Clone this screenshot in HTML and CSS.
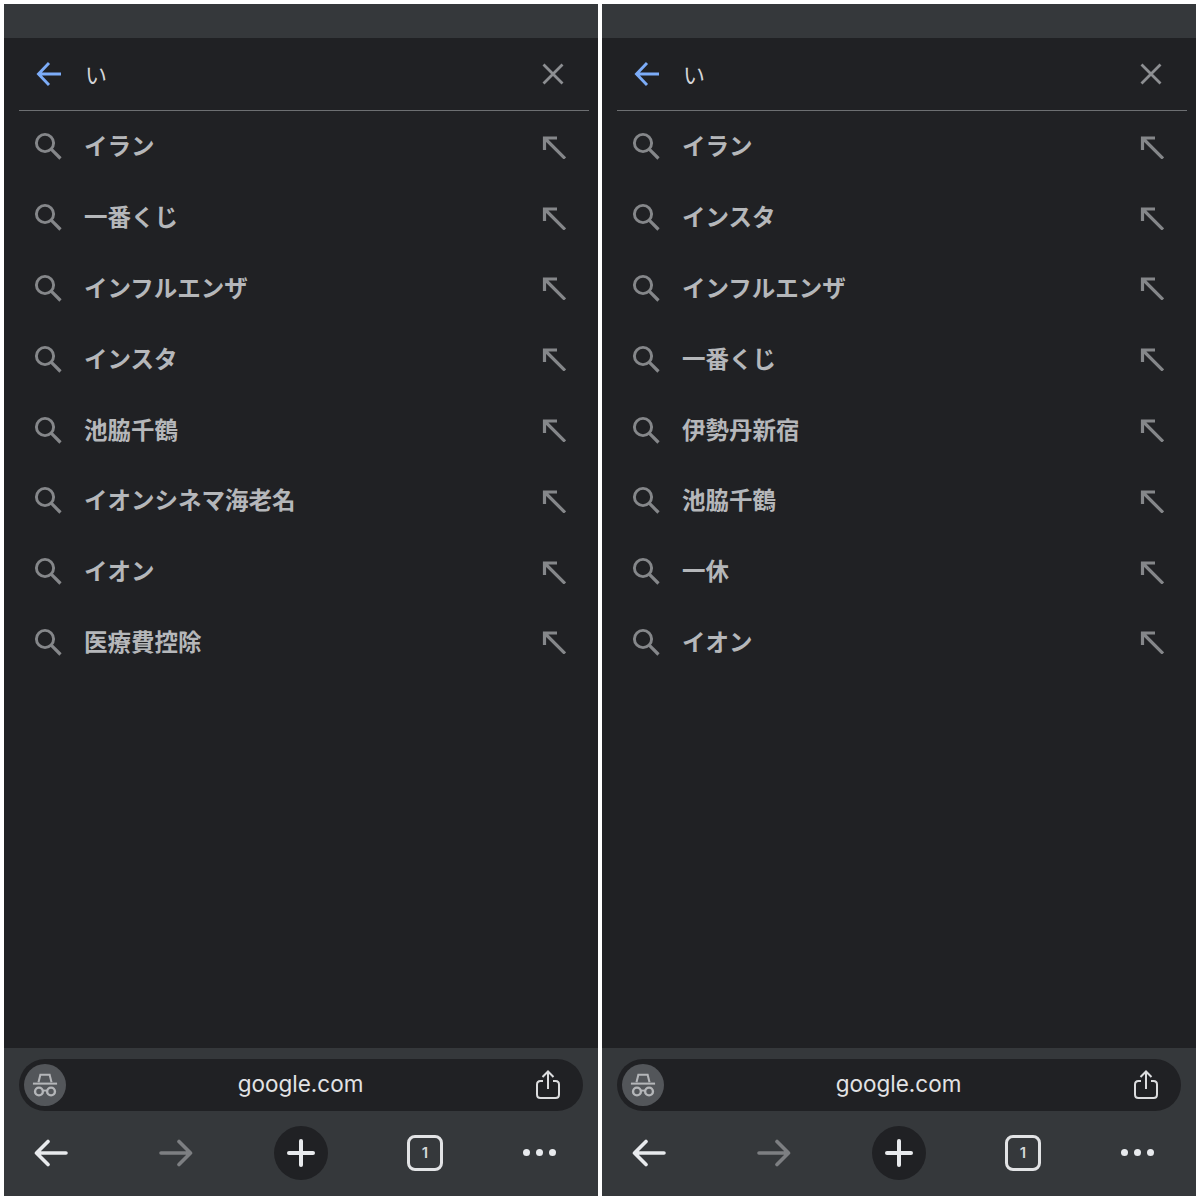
FILE: index.html
```html
<!DOCTYPE html>
<html lang="ja">
<head>
  <meta charset="UTF-8" />
  <title>い - google.com</title>
  <link rel="stylesheet" href="styles.css">
</head>
<body>
  <svg class="defs" width="0" height="0">
    <symbol id="i-search" viewBox="0 0 28 28">
      <circle cx="11" cy="11" r="8.6" fill="none" stroke="currentColor" stroke-width="2.9"/>
      <path d="M17.2 17.2 L26.500 26.500" fill="none" stroke="currentColor" stroke-width="3.200"/>
    </symbol>
    <symbol id="i-fill" viewBox="0 0 24 24">
      <path d="M2.500 3 L23 23.500 M2.500 1.500 V15 M1 3 H15" fill="none" stroke="currentColor" stroke-width="3.200"/>
    </symbol>
    <symbol id="i-close" viewBox="0 0 22 22">
      <path d="M1.500 1.500 L20.500 20.500 M20.500 1.500 L1.500 20.500" fill="none" stroke="currentColor" stroke-width="2.800"/>
    </symbol>
    <symbol id="i-back" viewBox="0 0 26 26">
      <path d="M25 13 H3 M13 2 L2.500 13 L13 24" fill="none" stroke="currentColor" stroke-width="2.900"/>
    </symbol>
    <symbol id="i-spy" viewBox="0 0 28 28">
      <path d="M7 11 L9 3 H19 L21 11" fill="none" stroke="currentColor" stroke-width="2.200"/>
      <path d="M1 12.500 H27" fill="none" stroke="currentColor" stroke-width="2.200"/>
      <circle cx="7.500" cy="21" r="4.200" fill="none" stroke="currentColor" stroke-width="2.600"/>
      <circle cx="20.500" cy="21" r="4.200" fill="none" stroke="currentColor" stroke-width="2.600"/>
      <path d="M11.700 20 H16.300" fill="none" stroke="currentColor" stroke-width="2"/>
    </symbol>
    <symbol id="i-share" viewBox="0 0 26 30">
      <path d="M8 11 H5.500 Q2 11 2 14.500 V24.500 Q2 28 5.500 28 H20.500 Q24 28 24 24.500 V14.500 Q24 11 20.500 11 H18" fill="none" stroke="currentColor" stroke-width="2"/>
      <path d="M13 19 V2 M7.500 7 L13 1.500 L18.500 7" fill="none" stroke="currentColor" stroke-width="2"/>
    </symbol>
    <symbol id="i-arrow" viewBox="0 0 36 28">
      <path d="M33 14 H4 M15 2.500 L3.500 14 L15 25.500" fill="none" stroke="currentColor" stroke-width="3.600" stroke-linecap="round" stroke-linejoin="round"/>
    </symbol>
  </svg>

  <div class="screens">
    <div class="phone">
      <div class="top-bar"></div>
      <div class="content">
        <div class="search-head">
          <svg class="back-icon"><use href="#i-back"/></svg>
          <span class="query">い</span>
          <svg class="close-icon"><use href="#i-close"/></svg>
        </div>
        <ul class="suggestions">
          <li><svg class="search-icon"><use href="#i-search"/></svg><span>イラン</span><svg class="fill-icon"><use href="#i-fill"/></svg></li>
          <li><svg class="search-icon"><use href="#i-search"/></svg><span>一番くじ</span><svg class="fill-icon"><use href="#i-fill"/></svg></li>
          <li><svg class="search-icon"><use href="#i-search"/></svg><span>インフルエンザ</span><svg class="fill-icon"><use href="#i-fill"/></svg></li>
          <li><svg class="search-icon"><use href="#i-search"/></svg><span>インスタ</span><svg class="fill-icon"><use href="#i-fill"/></svg></li>
          <li><svg class="search-icon"><use href="#i-search"/></svg><span>池脇千鶴</span><svg class="fill-icon"><use href="#i-fill"/></svg></li>
          <li><svg class="search-icon"><use href="#i-search"/></svg><span>イオンシネマ海老名</span><svg class="fill-icon"><use href="#i-fill"/></svg></li>
          <li><svg class="search-icon"><use href="#i-search"/></svg><span>イオン</span><svg class="fill-icon"><use href="#i-fill"/></svg></li>
          <li><svg class="search-icon"><use href="#i-search"/></svg><span>医療費控除</span><svg class="fill-icon"><use href="#i-fill"/></svg></li>
        </ul>
      </div>
      <div class="bottom">
        <div class="url-bar">
          <div class="spy"><svg class="spy-icon"><use href="#i-spy"/></svg></div>
          <span class="url">google.com</span>
          <svg class="share-icon"><use href="#i-share"/></svg>
        </div>
        <div class="toolbar">
          <div class="tool"><svg class="arrow"><use href="#i-arrow"/></svg></div>
          <div class="tool"><svg class="arrow forward"><use href="#i-arrow"/></svg></div>
          <div class="tool plus"><span class="plus-h"></span><span class="plus-v"></span></div>
          <div class="tool"><div class="tabs">1</div></div>
          <div class="tool more"><i></i><i></i><i></i></div>
        </div>
      </div>
    </div>

    <div class="phone">
      <div class="top-bar"></div>
      <div class="content">
        <div class="search-head">
          <svg class="back-icon"><use href="#i-back"/></svg>
          <span class="query">い</span>
          <svg class="close-icon"><use href="#i-close"/></svg>
        </div>
        <ul class="suggestions">
          <li><svg class="search-icon"><use href="#i-search"/></svg><span>イラン</span><svg class="fill-icon"><use href="#i-fill"/></svg></li>
          <li><svg class="search-icon"><use href="#i-search"/></svg><span>インスタ</span><svg class="fill-icon"><use href="#i-fill"/></svg></li>
          <li><svg class="search-icon"><use href="#i-search"/></svg><span>インフルエンザ</span><svg class="fill-icon"><use href="#i-fill"/></svg></li>
          <li><svg class="search-icon"><use href="#i-search"/></svg><span>一番くじ</span><svg class="fill-icon"><use href="#i-fill"/></svg></li>
          <li><svg class="search-icon"><use href="#i-search"/></svg><span>伊勢丹新宿</span><svg class="fill-icon"><use href="#i-fill"/></svg></li>
          <li><svg class="search-icon"><use href="#i-search"/></svg><span>池脇千鶴</span><svg class="fill-icon"><use href="#i-fill"/></svg></li>
          <li><svg class="search-icon"><use href="#i-search"/></svg><span>一休</span><svg class="fill-icon"><use href="#i-fill"/></svg></li>
          <li><svg class="search-icon"><use href="#i-search"/></svg><span>イオン</span><svg class="fill-icon"><use href="#i-fill"/></svg></li>
        </ul>
      </div>
      <div class="bottom">
        <div class="url-bar">
          <div class="spy"><svg class="spy-icon"><use href="#i-spy"/></svg></div>
          <span class="url">google.com</span>
          <svg class="share-icon"><use href="#i-share"/></svg>
        </div>
        <div class="toolbar">
          <div class="tool"><svg class="arrow"><use href="#i-arrow"/></svg></div>
          <div class="tool"><svg class="arrow forward"><use href="#i-arrow"/></svg></div>
          <div class="tool plus"><span class="plus-h"></span><span class="plus-v"></span></div>
          <div class="tool"><div class="tabs">1</div></div>
          <div class="tool more"><i></i><i></i><i></i></div>
        </div>
      </div>
    </div>
  </div>
</body>
</html>
```

FILE: styles.css
```css
html, body {
  margin: 0;
  padding: 0;
  background: #fff;
}
body {
  font-family: "Noto Sans CJK JP", "Noto Sans", sans-serif;
}
.defs { position: absolute; }

.screens {
  display: flex;
  gap: 4px;
  padding: 4px;
  height: 1200px;
  box-sizing: border-box;
}
.phone {
  width: 594px;
  height: 1192px;
  display: flex;
  flex-direction: column;
  background: #202124;
}

.top-bar {
  height: 34px;
  background: #35383b;
}
.content {
  flex: 1;
}

.search-head {
  height: 72px;
  margin: 0 9px 0 15px;
  padding: 0 25px 0 17px;
  display: flex;
  align-items: center;
  border-bottom: 1.500px solid #6d6f72;
}
.back-icon { width: 26px; height: 26px; color: #7cacf8; }
.query {
  flex: 1;
  margin-left: 23px;
  padding-bottom: 2px;
  font-size: 22px;
  color: #d3d5d8;
}
.close-icon { width: 22px; height: 22px; color: #8d8f92; }

.suggestions {
  list-style: none;
  margin: 0;
  padding: 0;
}
.suggestions li {
  height: 70.800px;
  padding: 0 32px 0 30px;
  display: flex;
  align-items: center;
  font-size: 23.500px;
  font-weight: 700;
  color: #b5b7ba;
}
.suggestions span {
  flex: 1;
  margin-left: 22px;
  padding-bottom: 2px;
}
.search-icon { width: 28px; height: 28px; color: #85878a; }
.fill-icon { width: 24px; height: 24px; margin-top: 1px; color: #85878a; }

.bottom {
  height: 148px;
  background: #35383b;
  box-sizing: border-box;
  padding-top: 11px;
}
.url-bar {
  height: 52px;
  margin: 0 15px;
  padding: 0 22px 0 5px;
  border-radius: 26px;
  background: #202124;
  display: flex;
  align-items: center;
}
.spy {
  width: 42px;
  height: 42px;
  border-radius: 50%;
  background: #53565a;
  display: flex;
  align-items: center;
  justify-content: center;
}
.spy-icon { width: 26px; height: 26px; color: #b4b6b9; }
.url {
  flex: 1;
  text-align: center;
  padding-bottom: 3px;
  font-family: Inter, "Liberation Sans", sans-serif;
  font-size: 22.500px;
  color: #e2e3e5;
}
.share-icon { width: 26px; height: 30px; color: #dcdddf; }

.toolbar {
  height: 83px;
  padding-left: 20px;
  display: flex;
  align-items: center;
  gap: 71px;
}
.tool {
  width: 54px;
  height: 54px;
  display: flex;
  align-items: center;
  justify-content: center;
  position: relative;
}
.arrow { width: 36px; height: 28px; color: #e8eaed; }
.arrow.forward { color: #7d7f82; transform: scaleX(-1); }

.plus {
  border-radius: 50%;
  background: #202124;
}
.plus-h, .plus-v {
  position: absolute;
  background: #e8eaed;
  border-radius: 2px;
}
.plus-h { width: 28px; height: 4px; }
.plus-v { width: 4px; height: 28px; }

.tabs {
  width: 30px;
  height: 30px;
  margin-right: 2px;
  border: 3px solid #e2e3e5;
  border-radius: 8px;
  display: flex;
  align-items: center;
  justify-content: center;
  font-family: Inter, "Liberation Sans", sans-serif;
  font-size: 15px;
  font-weight: 600;
  color: #d5d6d8;
}

.more {
  gap: 6px;
  margin-left: -12px;
}
.more i {
  width: 7px;
  height: 7px;
  border-radius: 50%;
  background: #e8eaed;
}
```
